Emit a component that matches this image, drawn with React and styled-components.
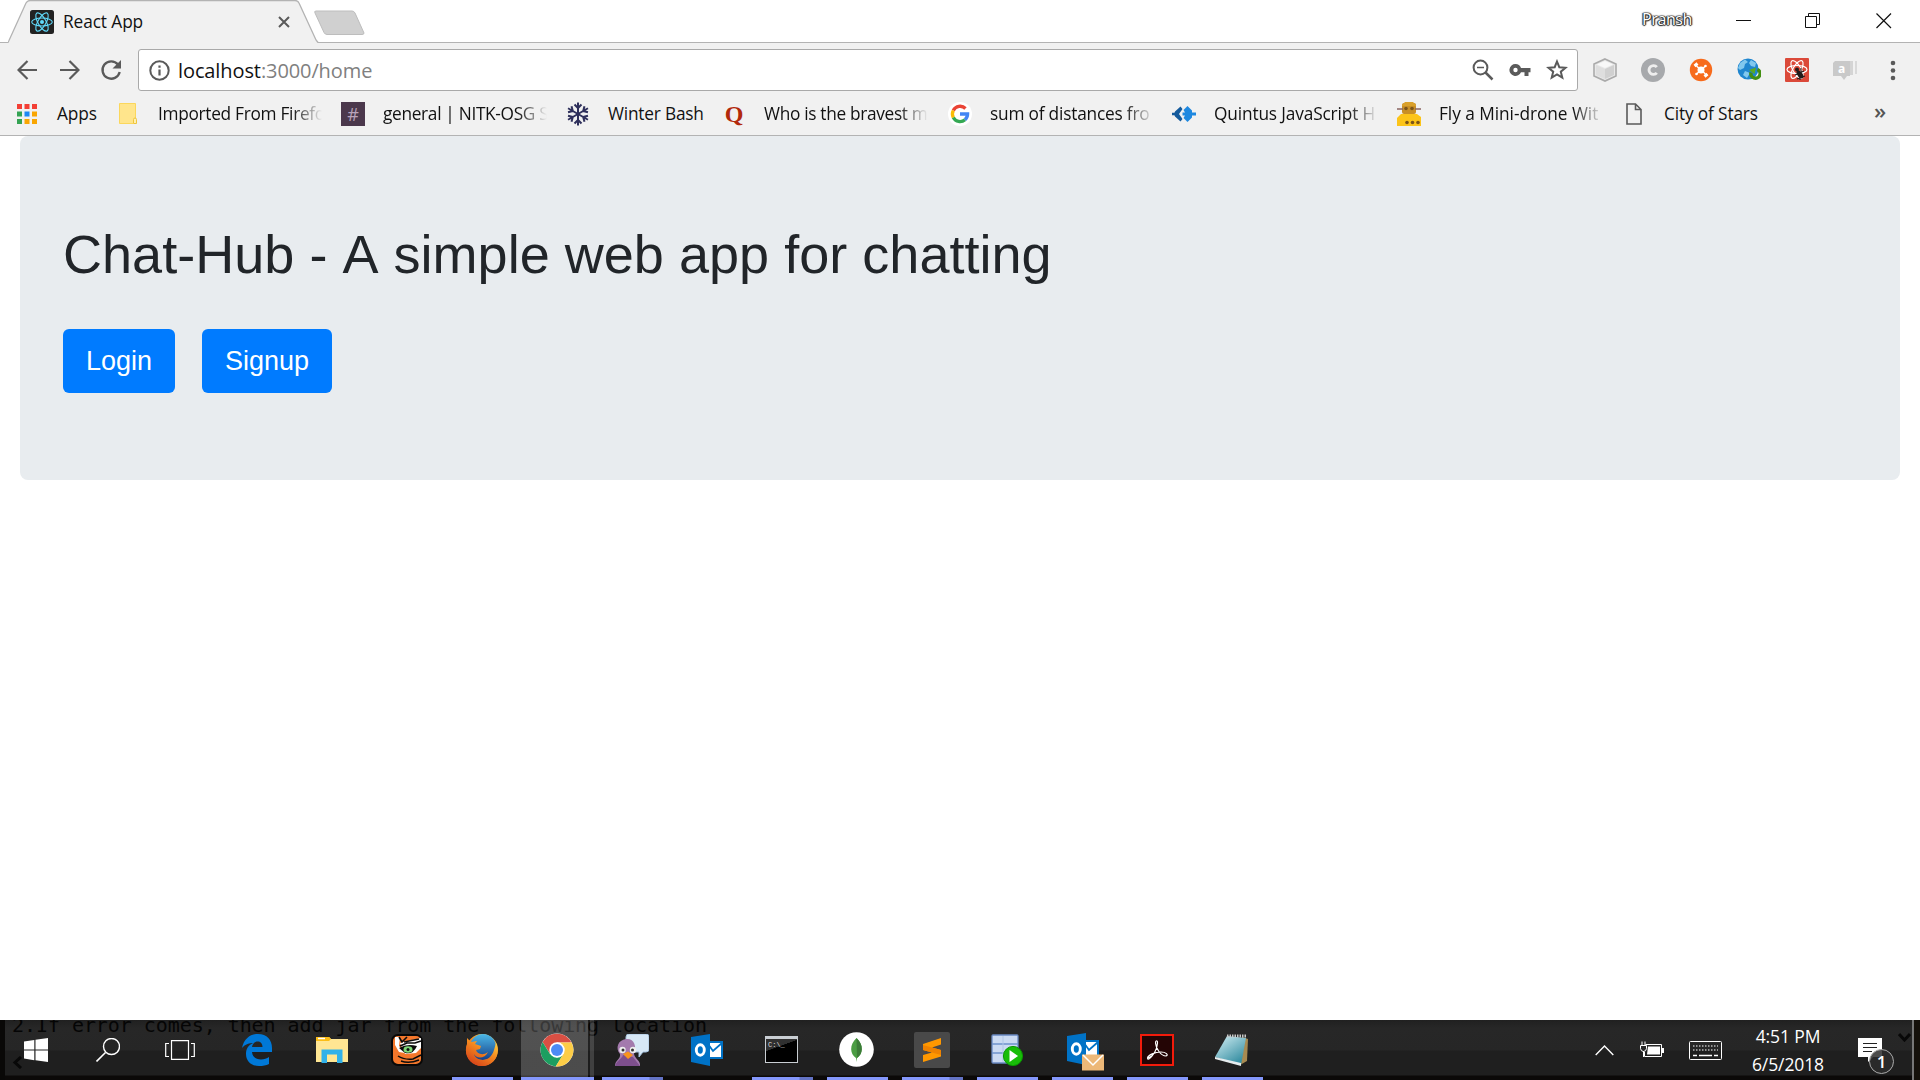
import React from "react";
import styled, { createGlobalStyle } from "styled-components";

const Global = createGlobalStyle`
  * { box-sizing: border-box; }
  body { margin: 0; background: #fff; overflow: hidden; }
  svg { display: block; flex: none; }
`;
const ui = `"Open Sans", "Noto Sans", sans-serif`;

const Screen = styled.div`
  width: 1920px; height: 1080px; display: flex; flex-direction: column;
  background: #fff; font-family: ${ui}; color: #111; overflow: hidden; white-space: nowrap;
`;
const TabStrip = styled.header`
  height: 43px; display: flex; border-bottom: 1px solid #b3b3b3; flex: none;
`;
const Tab = styled.div`
  position: relative; width: 306px; height: 43px; margin-left: 8px;
  display: flex; align-items: center; padding: 0 0 0 22px;
`;
const TabShape = styled.svg`position: absolute; left: 0; top: 0;`;
const TabTitle = styled.span`
  position: relative; margin-left: 9px; width: 215px; font-size: 17.3px; line-height: 24px; padding-top: 1px; letter-spacing: ${p => p.$ls}px;
`;
const Layer = styled.div`position: relative;`;
const NewTab = styled.div`padding: 10px 0 0 0;`;
const WindowControls = styled.div`margin-left: auto; display: flex; height: 42px;`;
const UserName = styled.span`
  color: #fff; font-size: 16px; line-height: 38px; margin-right: 17px; letter-spacing: -0.4px;
  text-shadow: 0 0 1px #222, 0 0 1px #222, 0 0 2px #222, 1px 0 1px #333, -1px 0 1px #333, 0 1px 1px #333;
`;
const WindowButton = styled.div`
  width: ${p => p.$w || 70}px; display: flex; align-items: center; justify-content: center;
`;
const Toolbar = styled.nav`
  height: 54px; flex: none; background: #f1f1f1; display: flex; padding: 6px 0 0 6px;
`;
const ToolCell = styled.div`
  width: ${p => p.$w}px; height: 42px; display: flex; align-items: center; justify-content: center;
`;
const AddressBar = styled.div`
  margin: 0 3px 0 6px; width: 1440px; height: 42px; background: #fff; border: 1px solid #a9a9a9; border-radius: 3px;
  display: flex; align-items: center; padding: 0 9px 0 10px;
`;
const Url = styled.span`
  margin-left: 8px; flex: 1; font-size: 20px; line-height: 28px; color: #808080; letter-spacing: -0.1px; padding-top: 1px;
  b { font-weight: 400; color: #111; }
`;
const AddressActions = styled.div`display: flex; gap: 15px; align-items: center;`;
const Bookmarks = styled.div`
  height: 39px; flex: none; background: #f1f1f1; border-bottom: 1px solid #b3b3b3;
  display: flex; padding: 0 0 5px 15px; align-items: center;
`;
const Bookmark = styled.div`
  width: ${p => p.$w}px; display: flex; align-items: center; flex: none;
`;
const BookmarkIcon = styled.div`
  width: 24px; height: 24px; display: flex; align-items: center; justify-content: center; flex: none; margin-right: 18px;
`;
const BookmarkLabel = styled.span`
  width: ${p => (p.$fade ? 164 : 110)}px; font-size: 17.3px; line-height: 26px; letter-spacing: ${p => p.$ls}px;
  ${p => p.$fade && "mask-image: linear-gradient(90deg, #000 82%, transparent 100%);"}
`;
const Overflow = styled.span`margin: -7px 0 0 78px; font-size: 22px; font-weight: 600; color: #555; line-height: 24px;`;
const HashTile = styled.div`
  width: 24px; height: 24px; background: #4b384c; color: #b9a3ba; font-size: 18px; line-height: 24px; text-align: center;
`;
const QuoraMark = styled.span`
  color: #b2290b; font: 700 24px/24px "Liberation Serif", serif; 
`;
const Page = styled.main`flex: 1; padding: 0 20px;`;
const Jumbotron = styled.section`
  height: 344px; padding: 85px 43px; background: #e8ecef; border-radius: 8px;
  font-family: "Liberation Sans", Arial, sans-serif;
`;
const Heading = styled.h1`
  margin: 0; font-size: 54px; line-height: 66px; font-weight: 400; color: #212529; letter-spacing: ${p => p.$ls}px;
  font-kerning: none;
`;
const Actions = styled.div`margin-top: 42px; display: flex; gap: 27px;`;
const Button = styled.button`
  width: ${p => p.$w}px; height: 64px; padding: 0; border: 0; border-radius: 6px; background: #007bff; color: #fff;
  font: 400 27px/64px "Liberation Sans", Arial, sans-serif;
`;

const Taskbar = styled.footer`
  position: relative; height: 60px; flex: none; display: flex; overflow: hidden;
  background: linear-gradient(180deg, #202020 0, #272727 8px, #262626 30px, #1f1f1f 31px, #1f1f1f 55px, #0b0908 56px, #0b0908 60px);
`;
const Ghost = styled.div`
  position: absolute; left: 12px; top: -8px; font: 20px/26px "DejaVu Sans Mono", monospace; color: #050505; letter-spacing: -0.06px;
`;
const GhostEdge = styled.div`position: absolute; left: 0; top: 0; width: 5px; height: 60px; background: #090807;`;
const GhostArrow = styled.svg`position: absolute; left: ${p => p.$x}px; top: ${p => p.$y}px;`;
const SystemButtons = styled.div`display: flex; width: 220px; position: relative;`;
const SystemButton = styled.div`
  width: 72px; height: 60px; display: flex; align-items: center; justify-content: center;
`;
const TaskButton = styled.div`
  position: relative; width: 75px; height: 60px; display: flex; flex-direction: column; align-items: center;
`;
const TaskHighlight = styled.div`
  position: absolute; left: 1px; top: 0; width: 73px; height: 60px;
  background: linear-gradient(90deg, rgba(255,255,255,.2) 67px, rgba(0,0,0,.1) 67px, rgba(0,0,0,.1) 69px, rgba(255,255,255,.15) 69px);
`;
const TaskIcon = styled.div`
  position: relative; height: 57px; display: flex; align-items: center; justify-content: center; padding: 2px 2px 0 0;
`;
const Running = styled.div`
  position: relative; width: ${p => (p.$active ? 73 : 61)}px; height: 3px;
  background: ${p => (p.$stack ? "linear-gradient(90deg, #8497fb 47px, #6373c4 48px)" : "#8497fb")};
`;
const Tray = styled.div`
  margin-left: auto; display: flex; align-items: center; height: 60px; position: relative; padding-right: 32px;
`;
const TrayIcon = styled.div`margin-right: ${p => p.$r}px;`;
const Clock = styled.div`
  width: 84px; text-align: center; color: #fff; font-size: 17.5px; line-height: 28px; letter-spacing: -0.1px; margin: 0 28px 0 1px;
  span { display: block; }
`;
const Notice = styled.div`position: relative; width: 30px; height: 38px; padding-top: 7px;`;
const Count = styled.span`
  position: absolute; left: 11px; top: 18px; width: 25px; height: 25px; border-radius: 50%; border: 1px solid #aaa;
  background: rgba(45,45,45,.85); color: #fff; font-size: 17px; font-weight: 600; line-height: 23px; text-align: center;
`;
const DesktopEdge = styled.div`position: absolute; right: 0; top: 0; width: 8px; height: 60px; background: #15110b; border-left: 2px solid #777;`;

const Svg = ({ w = 24, h = w, vb = `0 0 ${w} ${h}`, children, ...r }) => (
  <svg width={w} height={h} viewBox={vb} fill="none" {...r}>{children}</svg>
);
const gray = "#5a5a5a";

const ReactMark = () => (
  <Svg>
    <rect width="24" height="24" rx="2.5" fill="#222" />
    <g stroke="#61dafb" strokeWidth="1.1">
      {[30, 90, 150].map(a => <ellipse key={a} cx="12" cy="12" rx="10.3" ry="4" transform={`rotate(${a - 30} 12 12)`} />)}
    </g>
    <circle cx="12" cy="12" r="2" fill="#61dafb" />
  </Svg>
);
const Arrow = ({ flip }) => (
  <Svg w={21} h={20} transform={flip ? "scale(-1 1)" : undefined}>
    <path d="M20 10H2M10.500 1L1.500 10L10.500 19" stroke={gray} strokeWidth="2.2" />
  </Svg>
);
const Reload = () => (
  <Svg w={22}>
    <path d="M18 5.500A8.700 8.700 0 1 0 19.700 13" stroke={gray} strokeWidth="2.3" />
    <path d="M21 1V9.500H12.500Z" fill={gray} />
  </Svg>
);
const Info = () => (
  <Svg w={21}>
    <circle cx="10.5" cy="10.5" r="9.2" stroke={gray} strokeWidth="2" />
    <path d="M10.500 9.500V15.500M10.500 5.500V7.700" stroke={gray} strokeWidth="2.2" />
  </Svg>
);
const ZoomOut = () => (
  <Svg w={22}>
    <circle cx="8.500" cy="8.500" r="6.900" stroke={gray} strokeWidth="2" />
    <path d="M5 8.500H12" stroke={gray} strokeWidth="1.500" /><path d="M13.500 13.500L20.500 20.500" stroke={gray} strokeWidth="2.500" />
  </Svg>
);
const Key = () => (
  <Svg w={22} h={14}>
    <path fillRule="evenodd" d="M6.500 1A6 6 0 1 0 12 9.200H15.500V13H19.500V9.200H21.500V5H12A6 6 0 0 0 6.500 1ZM6.500 4.800A2.200 2.200 0 1 1 6.500 9.200A2.200 2.200 0 1 1 6.500 4.800Z" fill={gray} />
  </Svg>
);
const Star = () => (
  <Svg w={22}><path d="M11 2.500L13.300 8.200L19.500 8.700L14.800 12.700L16.300 18.700L11 15.500L5.700 18.700L7.200 12.700L2.500 8.700L8.700 8.200Z" stroke={gray} strokeWidth="2" /></Svg>
);

const CubeExt = () => (
  <Svg><path d="M12 1L23 6V18L12 23L1 18V6Z" fill="#e8e8e8" stroke="#aaa" strokeWidth="1.600" /><path d="M3 7L12 11V21L3 17Z" fill="#dedede" /><path d="M12 11L21 7V17L12 21Z" fill="#d0d0d0" /><path d="M12 3L20 6.500L12 10L4 6.500Z" fill="#f8f8f8" /></Svg>
);
const CircleCExt = () => (
  <Svg><circle cx="12" cy="12" r="12" fill="#a7a9ac" /><path d="M15.800 9.200A4.400 4.400 0 1 0 15.800 14.800" stroke="#eee" strokeWidth="2.900" /></Svg>
);
const OrangeExt = () => (
  <Svg><circle cx="12" cy="12" r="11.200" fill="#f76b1c" /><g stroke="#fff"><path d="M7.500 8L16.500 16M16.500 8L7.500 16" strokeWidth="1.500" /><path d="M5.500 8L8.500 5.500M15.500 18.500L18.500 16" strokeWidth="3" /></g><circle cx="12" cy="12" r="3.500" fill="#fff" /><circle cx="16.500" cy="8" r="1.300" fill="#fff" /><circle cx="7.500" cy="16" r="1.300" fill="#fff" /></Svg>
);
const GlobeExt = () => (
  <Svg><circle cx="11" cy="11" r="10.500" fill="#1f86cf" /><path d="M3 5L8 1.500L11 4L8 6L7 10L3 12L1 10ZM14 2L19 5L18 9L14 8L12 5ZM8 13L13 15L10 20L6 17Z" fill="#81c8ee" /><path d="M20.500 11.500A4.600 4.600 0 1 1 14 14.500" stroke="#438f12" strokeWidth="3.400" /><path d="M12 12L19 9.500L17.500 16Z" fill="#5ca91f" /></Svg>
);
const ReactBugExt = () => (
  <Svg><rect width="24" height="24" rx="1" fill="#db4939" /><g stroke="#fff" strokeWidth="1.200">{[0, 60, 120].map(a => <ellipse key={a} cx="12" cy="11.500" rx="10" ry="4" transform={`rotate(${a} 12 11.500)`} />)}</g><ellipse cx="15" cy="16.500" rx="2.500" ry="4.500" transform="rotate(-35 15 16.500)" fill="#221c1b" /><circle cx="12" cy="11.500" r="2" fill="#221c1b" /><path d="M10 17L19 13M12 21L20 18M16 10V14M15 18V22" stroke="#221c1b" strokeWidth="1.100" /></Svg>
);
const ChatLetter = styled.div`
  position: relative; width: 24px; height: 20px; color: #fff; font-weight: 700; font-size: 12px; line-height: 15px;
  span { position: absolute; left: 5px; top: 1px; }
`;
const ChatExt = () => (
  <ChatLetter><Svg w={24} h={20}><path d="M2 1H17V16H14L11 20L8 16H0V3Z" fill="#c9c9c9" /><path d="M18.500 1V15" stroke="#d4d4d4" strokeWidth="3" /><path d="M23 1V14" stroke="#d0d0d0" strokeWidth="1.500" /></Svg><span>a</span></ChatLetter>
);
const Dots = () => <Svg w={6} h={21} fill={gray}><g fill={gray}><circle cx="3" cy="3" r="2.300" /><circle cx="3" cy="10.500" r="2.300" /><circle cx="3" cy="18" r="2.300" /></g></Svg>;

const AppsIcon = () => (
  <Svg w={20}>{["#f33f35", "#f33f35", "#f33f35", "#34a353", "#1e88f5", "#f9a602", "#34a353", "#f9a602", "#f9a602"].map((c, i) => (
    <rect key={i} x={(i % 3) * 7.500} y={Math.floor(i / 3) * 7.500} width="5" height="5" fill={c} />
  ))}</Svg>
);
const FolderIcon = () => <Svg w={18} h={21}><path d="M0.500 0.500H16.500V20.500H0.500Z" fill="#ffe58c" stroke="#fbd75c" /><path d="M14.500 20V16.500A1.500 1.500 0 0 1 17.500 16.500V20.500H14.500" fill="#fff0b0" stroke="#efc53d" /></Svg>;
const Snowflake = () => (
  <Svg>{[0, 60, 120, 180, 240, 300].map(a => <g key={a} transform={`rotate(${a} 12 12)`} stroke="#2e2f5b" strokeWidth="2"><path d="M12 12V0.500M8.500 2.500L12 6L15.500 2.500" /></g>)}</Svg>
);
const GoogleIcon = () => (
  <Svg><circle cx="12" cy="12" r="12" fill="#fff" /><g strokeWidth="3.300"><path d="M17.500 6.500A7.600 7.600 0 0 0 5.300 8.500" stroke="#ea4335" /><path d="M5.300 8.500A7.600 7.600 0 0 0 5.300 15.500" stroke="#fbbc05" /><path d="M5.300 15.500A7.600 7.600 0 0 0 17 17.700" stroke="#34a853" /><path d="M17 17.700A7.600 7.600 0 0 0 19.600 12H12" stroke="#4285f4" /></g></Svg>
);
const QuintusIcon = () => (
  <Svg><path d="M8.500 4.500L3 9.500L2 12L3 14.500L8.500 19.500L10.500 17L7 12L10.500 7Z" fill="#145a9c" /><path d="M0 12H5" stroke="#145a9c" strokeWidth="2.500" /><path d="M15.500 4L20 8.500V10.500H24V13.500H20V15.500L15.500 20L11.500 16L13 13.500H10.500V10.500H13L11.500 8Z" fill="#1e88e0" /></Svg>
);
const DroneIcon = () => (
  <Svg><path d="M0 24V16L4 12H20L24 15V24Z" fill="#fcc419" /><rect x="5" y="1" width="14" height="11" rx="2" fill="#c98f25" /><path d="M5 3L8 0H16L19 3V4H5Z" fill="#d9a02a" /><path d="M0 7H6M18 7H24" stroke="#8b6662" strokeWidth="1.500" /><g fill="#7b5519"><circle cx="9" cy="6.500" r="1.800" /><circle cx="15" cy="6.500" r="1.800" /><circle cx="10" cy="20.500" r="1.800" /><circle cx="15.500" cy="20.500" r="1.800" /><circle cx="21" cy="20.500" r="1.800" /></g></Svg>
);
const FileIcon = () => <Svg w={16} h={22}><path d="M1 1H9.500L15 6.500V21H1ZM9.500 1V6.500H15" stroke={gray} strokeWidth="1.600" /></Svg>;

const WindowsIcon = () => <Svg><path d="M0 3.600L10.300 2V11.500H0ZM11.500 1.800L24 0V11.500H11.500ZM0 12.600H10.300V22.200L0 20.600ZM11.500 12.600H24V24L11.500 22.300Z" fill="#fff" /></Svg>;
const SearchIcon = () => <Svg><circle cx="15.500" cy="8.500" r="8" stroke="#fff" strokeWidth="1.400" /><path d="M9.500 14.500L0.500 23.500" stroke="#fff" strokeWidth="1.600" /></Svg>;
const TaskViewIcon = () => <Svg w={30} h={20}><path d="M6.500 0.700H23.500V19.300H6.500ZM4 3.500H0.700V16.500H4M26 3.500H29.300V16.500H26" stroke="#fff" strokeWidth="1.200" /></Svg>;
const EdgeIcon = () => <Svg w={30} h={32}><path d="M0 14C2 5 8 0 16 0C25 0 30 6 30 14V18H10C10.500 23 14 25.500 19 25.500C22 25.500 25 24.500 27 23V30C24 31.500 21 32 17 32C9 32 4 27 4 20C4 15 6 11.500 11 9C8 9 3 10 0 14ZM10 13H20.500C20.500 9.500 18.500 7.500 15.500 7.500C12.500 7.500 10.500 10 10 13Z" fill="#0078d7" /></Svg>;
const ExplorerIcon = () => <Svg w={32} h={27}><path d="M0 1H13L15 3H32V26H0Z" fill="#ffe693" /><path d="M0 1H13L15 3L13 5H0Z" fill="#fbbd16" /><path d="M2 2.500H9" stroke="#fff" strokeWidth="1.500" /><path d="M5.500 27V13.500H26.500V27H21V18.500H11V27Z" fill="#31b1e9" /></Svg>;
const TigerIcon = () => (
  <Svg w={32}>
    <rect x="1" y="1" width="30" height="30" rx="6" fill="#f4772b" stroke="#080808" strokeWidth="2" />
    <path d="M4 3H9L8 12L14 19L8 18L4 11Z" fill="#fff" />
    <path d="M9 9L16 7L30 4V14L25 19L14 20Z" fill="#fff" />
    <path d="M8 3L11 8L16 3M13 8L28 5M9 12L16 9L24 9L30 7" stroke="#0b0b0b" strokeWidth="1.600" />
    <path d="M8 14Q16 9 26 12Q22 21 14 19Z" fill="#0b0b0b" />
    <ellipse cx="17" cy="15.500" rx="4.500" ry="3.300" fill="#7fd877" /><circle cx="17" cy="15.500" r="1.500" fill="#111" />
    <path d="M7 22Q13 26 22 25L30 21M10 27Q18 30 28 26" stroke="#0b0b0b" strokeWidth="1.500" />
  </Svg>
);
const FirefoxIcon = () => (
  <Svg w={34}><defs><linearGradient id="fx" x1="0.900" y1="0" x2="0.200" y2="1"><stop stopColor="#ffe34a" /><stop offset=".45" stopColor="#f58a1f" /><stop offset="1" stopColor="#d33d19" /></linearGradient><linearGradient id="fb" x1="0" y1="0" x2="0" y2="1"><stop stopColor="#4bb8e8" /><stop offset="1" stopColor="#173f88" /></linearGradient></defs><circle cx="17" cy="17" r="16" fill="url(#fx)" /><circle cx="18" cy="14" r="13" fill="url(#fb)" /><path d="M2 5L6 9L12 8L10 11L16 13L15 16L11 17C12 21 18 23 23 19C20 26 11 26 9 21C10 28 25 31 29 17L31 10C36 23 28 33 17 33C5 33 -2 22 2 11Z" fill="url(#fx)" /></Svg>
);
const ChromeIcon = () => (
  <Svg w={34}><circle cx="17" cy="17" r="16.500" fill="#fff" /><path d="M2.600 9A16.500 16.500 0 0 1 31.500 9.500H17L9.500 20Z" fill="#d94f43" /><path d="M2.600 9A16.500 16.500 0 0 0 15.700 33.500L23.500 21L17 24.500L10 21Z" fill="#1c9e60" /><path d="M31.500 9.500A16.500 16.500 0 0 1 15.700 33.500L23.500 20.500L24.500 15L20 9.500Z" fill="#fdcd47" /><circle cx="17" cy="17" r="7.700" fill="#fff" /><circle cx="17" cy="17" r="6" fill="#4c8bf5" /></Svg>
);
const PidginIcon = () => (
  <Svg w={34} h={32}><path d="M14 0H31Q34 0 34 3V15Q34 18 31 18H28L24 23V18H14Q11 18 11 15V3Q11 0 14 0Z" fill="#d7e8f6" stroke="#a3c0dc" /><path d="M0 32C0 26 6 25 5 20C0 14 3 6 11 5C19 4 22 12 19 20C20 25 26 27 25 32Z" fill="#a37aad" /><path d="M0 32C2 26 7 25 8 21L18 23L25 32Z" fill="#7e4f8d" /><circle cx="7.500" cy="16" r="3.200" fill="#eee" /><circle cx="18" cy="16" r="3.200" fill="#eee" /><circle cx="8" cy="16" r="1.500" fill="#333" /><circle cx="17.500" cy="16" r="1.500" fill="#333" /><path d="M8 20L13 17.500L18 21L13 25Z" fill="#f8941d" /></Svg>
);
const OutlookIcon = ({ mail }) => (
  <Svg w={mail ? 37 : 32} h={mail ? 38 : 32}><rect x="15" y="7" width="17" height="18" fill="#0072c6" /><path d="M17 9H30V23H17Z" fill="#fff" /><path d="M17 10L22 17L31 9" stroke="#0072c6" strokeWidth="1.800" /><path d="M0 3L19 0V32L0 28Z" fill="#0072c6" /><ellipse cx="9.300" cy="16" rx="4" ry="5.200" stroke="#fff" strokeWidth="2.900" />{mail && <><rect x="15" y="21.500" width="22" height="16" fill="#edb878" /><path d="M16 22L26 32L36 22" stroke="#fff" strokeWidth="1.500" /></>}</Svg>
);
const IconNudge = styled.div`padding: 4px 0 0 7px;`;
const TerminalFace = styled.div`
  width: 33px; height: 27px; border: 1px solid #c9ced3; border-top: 3px solid #c9ced3; background: linear-gradient(160deg, #303030 35%, #000 36%);
  color: #ddd; font: 7px/8px "Liberation Mono", monospace; padding: 2px; 
`;
const MongoIcon = () => <Svg w={35}><circle cx="17.500" cy="17.500" r="17.300" fill="#fff" /><path d="M17.500 6C25 13 24 22 18 26L17.500 30L17 26C11 22 10 13 17.500 6Z" fill="#4b9d43" /><path d="M17.500 6C25 13 24 22 18 26Z" fill="#3b7c37" /></Svg>;
const SublimeIcon = () => <Svg w={36}><rect width="36" height="36" rx="2" fill="#494949" /><path d="M9 12L27 6V12.500L18 15.500L27 18V24.500L9 30V23L18 20.500L9 18Z" fill="#ff9800" /><path d="M9 18L9 13L27 18V23Z" fill="#ef8200" /></Svg>;
const RunIcon = () => <Svg w={32}><rect x="1" y="1" width="26" height="28" rx="1" fill="#cbdaf2" stroke="#6888c1" strokeWidth="1.300" /><path d="M1 10H27M1 19H27" stroke="#6f92cb" strokeWidth="1.500" /><path d="M12 2V28" stroke="#b0c5e6" /><circle cx="22" cy="22" r="9.600" fill="#18bd08" stroke="#0a9800" /><path d="M18.500 16V28L27 22Z" fill="#fff" /></Svg>;
const AcrobatIcon = () => <Svg w={34} h={32}><rect x="1" y="1" width="32" height="30" fill="#240505" stroke="#f31b0b" strokeWidth="2" /><path d="M8 24C14 22 17 15 17.500 9C17.500 6 15.500 6 15.500 9C16 15 21 22 26 22C29 21 26 18 21 18C15 18 8 21 7.500 24C7.500 27 11 24 13.500 20" stroke="#fff" strokeWidth="1.200" /></Svg>;
const NotepadIcon = () => <Svg w={34} h={32}><defs><linearGradient id="np" x1="0" y1="0" x2="0.700" y2="1"><stop stopColor="#d5f0f5" /><stop offset="1" stopColor="#328ca0" /></linearGradient></defs><path d="M27 3L33 5L32 27L25 31Z" fill="#a78a51" /><path d="M12 2L31 4L26 31L0 23Z" fill="url(#np)" /><path d="M0 23L26 29V32L0 25Z" fill="#e6ecee" /><path d="M12 2H31" stroke="#c9c9c9" strokeWidth="3" strokeDasharray="1.500 1" /></Svg>;

const bookmarks = [
  { w: 101, icon: <AppsIcon />, text: "Apps", ls: -0.1 },
  { w: 225, icon: <FolderIcon />, text: "Imported From Firefo", fade: true, ls: -0.3 },
  { w: 225, icon: <HashTile>#</HashTile>, text: "general | NITK-OSG S", fade: true, ls: -0.32 },
  { w: 156, icon: <Snowflake />, text: "Winter Bash", ls: -0.2 },
  { w: 226, icon: <QuoraMark>Q</QuoraMark>, text: "Who is the bravest m", fade: true, ls: -0.32 },
  { w: 224, icon: <GoogleIcon />, text: "sum of distances fro", fade: true, ls: -0.2 },
  { w: 225, icon: <QuintusIcon />, text: "Quintus JavaScript H", fade: true, ls: -0.15 },
  { w: 225, icon: <DroneIcon />, text: "Fly a Mini-drone Wit", fade: true, ls: -0.05 },
  { w: 174, icon: <FileIcon />, text: "City of Stars", ls: -0.15 },
];
const extensions = [CubeExt, CircleCExt, OrangeExt, GlobeExt, ReactBugExt, ChatExt, Dots];
const tasks = [
  { icon: <EdgeIcon /> }, { icon: <ExplorerIcon /> }, { icon: <TigerIcon /> },
  { icon: <FirefoxIcon />, run: true }, { icon: <ChromeIcon />, run: true, active: true },
  { icon: <PidginIcon />, run: true, stack: true }, { icon: <OutlookIcon /> },
  { icon: <TerminalFace>C:\_</TerminalFace>, run: true, stack: true }, { icon: <MongoIcon />, run: true },
  { icon: <SublimeIcon />, run: true, stack: true }, { icon: <RunIcon />, run: true },
  { icon: <IconNudge><OutlookIcon mail /></IconNudge>, run: true }, { icon: <AcrobatIcon />, run: true }, { icon: <NotepadIcon />, run: true },
];

export default function App() {
  return (
    <Screen>
      <Global />
      <TabStrip>
        <Tab>
          <TabShape width="312" height="43" viewBox="0 0 312 43">
            <path d="M0 43L1 41.500L18 3Q19.500 0.500 22 0.500H287Q290 0.500 291 3L308 40L310 43Z" fill="#f1f1f1" />
            <path d="M0 42.500L1 40.500L18 3Q19.500 0.500 22 0.500H287Q290 0.500 291 3L308 40L310 42.500" fill="none" stroke="#b3b3b3" strokeWidth="1.300" />
          </TabShape>
          <Layer><ReactMark /></Layer>
          <TabTitle $ls={-0.1}>React App</TabTitle>
          <Layer><Svg w={12}><path d="M1 1L11 11M11 1L1 11" stroke={gray} strokeWidth="2" /></Svg></Layer>
        </Tab>
        <NewTab><Svg w={52} h={26}><path d="M2 1H38Q40 1 41 3L50 23Q50 24.500 48 24.500H13Q11 24.500 10 22.500L1 3Q0 1 2 1Z" fill="#d0d0d0" stroke="#bdbdbd" /></Svg></NewTab>
        <WindowControls>
          <UserName>Pransh</UserName>
          <WindowButton $w={69}><Svg w={16}><path d="M0 7.500H15" stroke="#111" /></Svg></WindowButton>
          <WindowButton $w={70}><Svg w={16}><path d="M0.500 3.500H11.500V14.500H0.500ZM3.500 3.500V0.500H14.500V11.500H11.500" stroke="#111" /></Svg></WindowButton>
          <WindowButton $w={72}><Svg w={16}><path d="M0.500 0.500L15 15M15 0.500L0.500 15" stroke="#111" strokeWidth="1.200" /></Svg></WindowButton>
        </WindowControls>
      </TabStrip>
      <Toolbar>
        <ToolCell $w={42}><Arrow /></ToolCell>
        <ToolCell $w={42}><Arrow flip /></ToolCell>
        <ToolCell $w={42}><Reload /></ToolCell>
        <AddressBar>
          <Info />
          <Url><b>localhost</b>:3000/home</Url>
          <AddressActions><ZoomOut /><Key /><Star /></AddressActions>
        </AddressBar>
        {extensions.map((Ext, i) => <ToolCell key={i} $w={48}><Ext /></ToolCell>)}
      </Toolbar>
      <Bookmarks>
        {bookmarks.map(b => (
          <Bookmark key={b.text} $w={b.w}>
            <BookmarkIcon>{b.icon}</BookmarkIcon>
            <BookmarkLabel $fade={b.fade} $ls={b.ls}>{b.text}</BookmarkLabel>
          </Bookmark>
        ))}
        <Overflow>»</Overflow>
      </Bookmarks>
      <Page>
        <Jumbotron>
          <Heading $ls={0.03}>Chat-Hub - A simple web app for chatting</Heading>
          <Actions><Button $w={112}>Login</Button><Button $w={130}>Signup</Button></Actions>
        </Jumbotron>
      </Page>
      <Taskbar>
        <Ghost>2.If error comes, then add jar from the following location</Ghost>
        <GhostEdge />
        <GhostArrow $x={12} $y={36} width="11" height="13"><path d="M9 1L3 6.500L9 12" stroke="#080808" strokeWidth="3" fill="none" /></GhostArrow>
        <SystemButtons>
          <SystemButton><WindowsIcon /></SystemButton>
          <SystemButton><SearchIcon /></SystemButton>
          <SystemButton><TaskViewIcon /></SystemButton>
        </SystemButtons>
        {tasks.map((t, i) => (
          <TaskButton key={i}>
            {t.active && <TaskHighlight />}
            <TaskIcon>{t.icon}</TaskIcon>
            {t.run && <Running $active={t.active} $stack={t.stack} />}
          </TaskButton>
        ))}
        <Tray>
          <TrayIcon $r={26}><Svg w={19} h={11}><path d="M0.700 10L9.500 1L18.300 10" stroke="#fff" strokeWidth="1.400" /></Svg></TrayIcon>
          <TrayIcon $r={25}><Svg w={24} h={18}><path d="M5.500 3.500H21.500V15.500H4.500V11" stroke="#fff" /><path d="M8 5.500H20V13.500H7Z" fill="#fff" /><path d="M22 7V12H24V7Z" fill="#fff" /><path d="M0.500 4.500H6.500V7.500Q6 10.500 3.500 10.500Q1 10.500 0.500 7.500Z" fill="#262626" stroke="#fff" /><path d="M2 4V0.500M5 4V0.500M3.500 10V16" stroke="#fff" /></Svg></TrayIcon>
          <TrayIcon $r={23}><Svg w={33} h={19}><rect x="0.500" y="0.500" width="32" height="18" rx="1" stroke="#fff" /><path d="M4 5H29M4 9H29" stroke="#fff" strokeWidth="1.200" strokeDasharray="1.500 1.500" /><path d="M4 14.500H8M10 14.500H23M25 14.500H29" stroke="#fff" strokeWidth="1.300" /></Svg></TrayIcon>
          <Clock><span>4:51 PM</span><span>6/5/2018</span></Clock>
          <Notice><Svg w={24} h={25}><path d="M0 0H24V19H15L10 24V19H0Z" fill="#fff" /><path d="M5 5.500H19M5 9.500H19M5 13.500H14" stroke="#222" strokeWidth="1.200" /></Svg><Count>1</Count></Notice>
          <GhostArrow $x={303} $y={12} width="13" height="10"><path d="M1 2L6.500 8L12 2" stroke="#080808" strokeWidth="3" fill="none" /></GhostArrow>
          <DesktopEdge />
        </Tray>
      </Taskbar>
    </Screen>
  );
}
